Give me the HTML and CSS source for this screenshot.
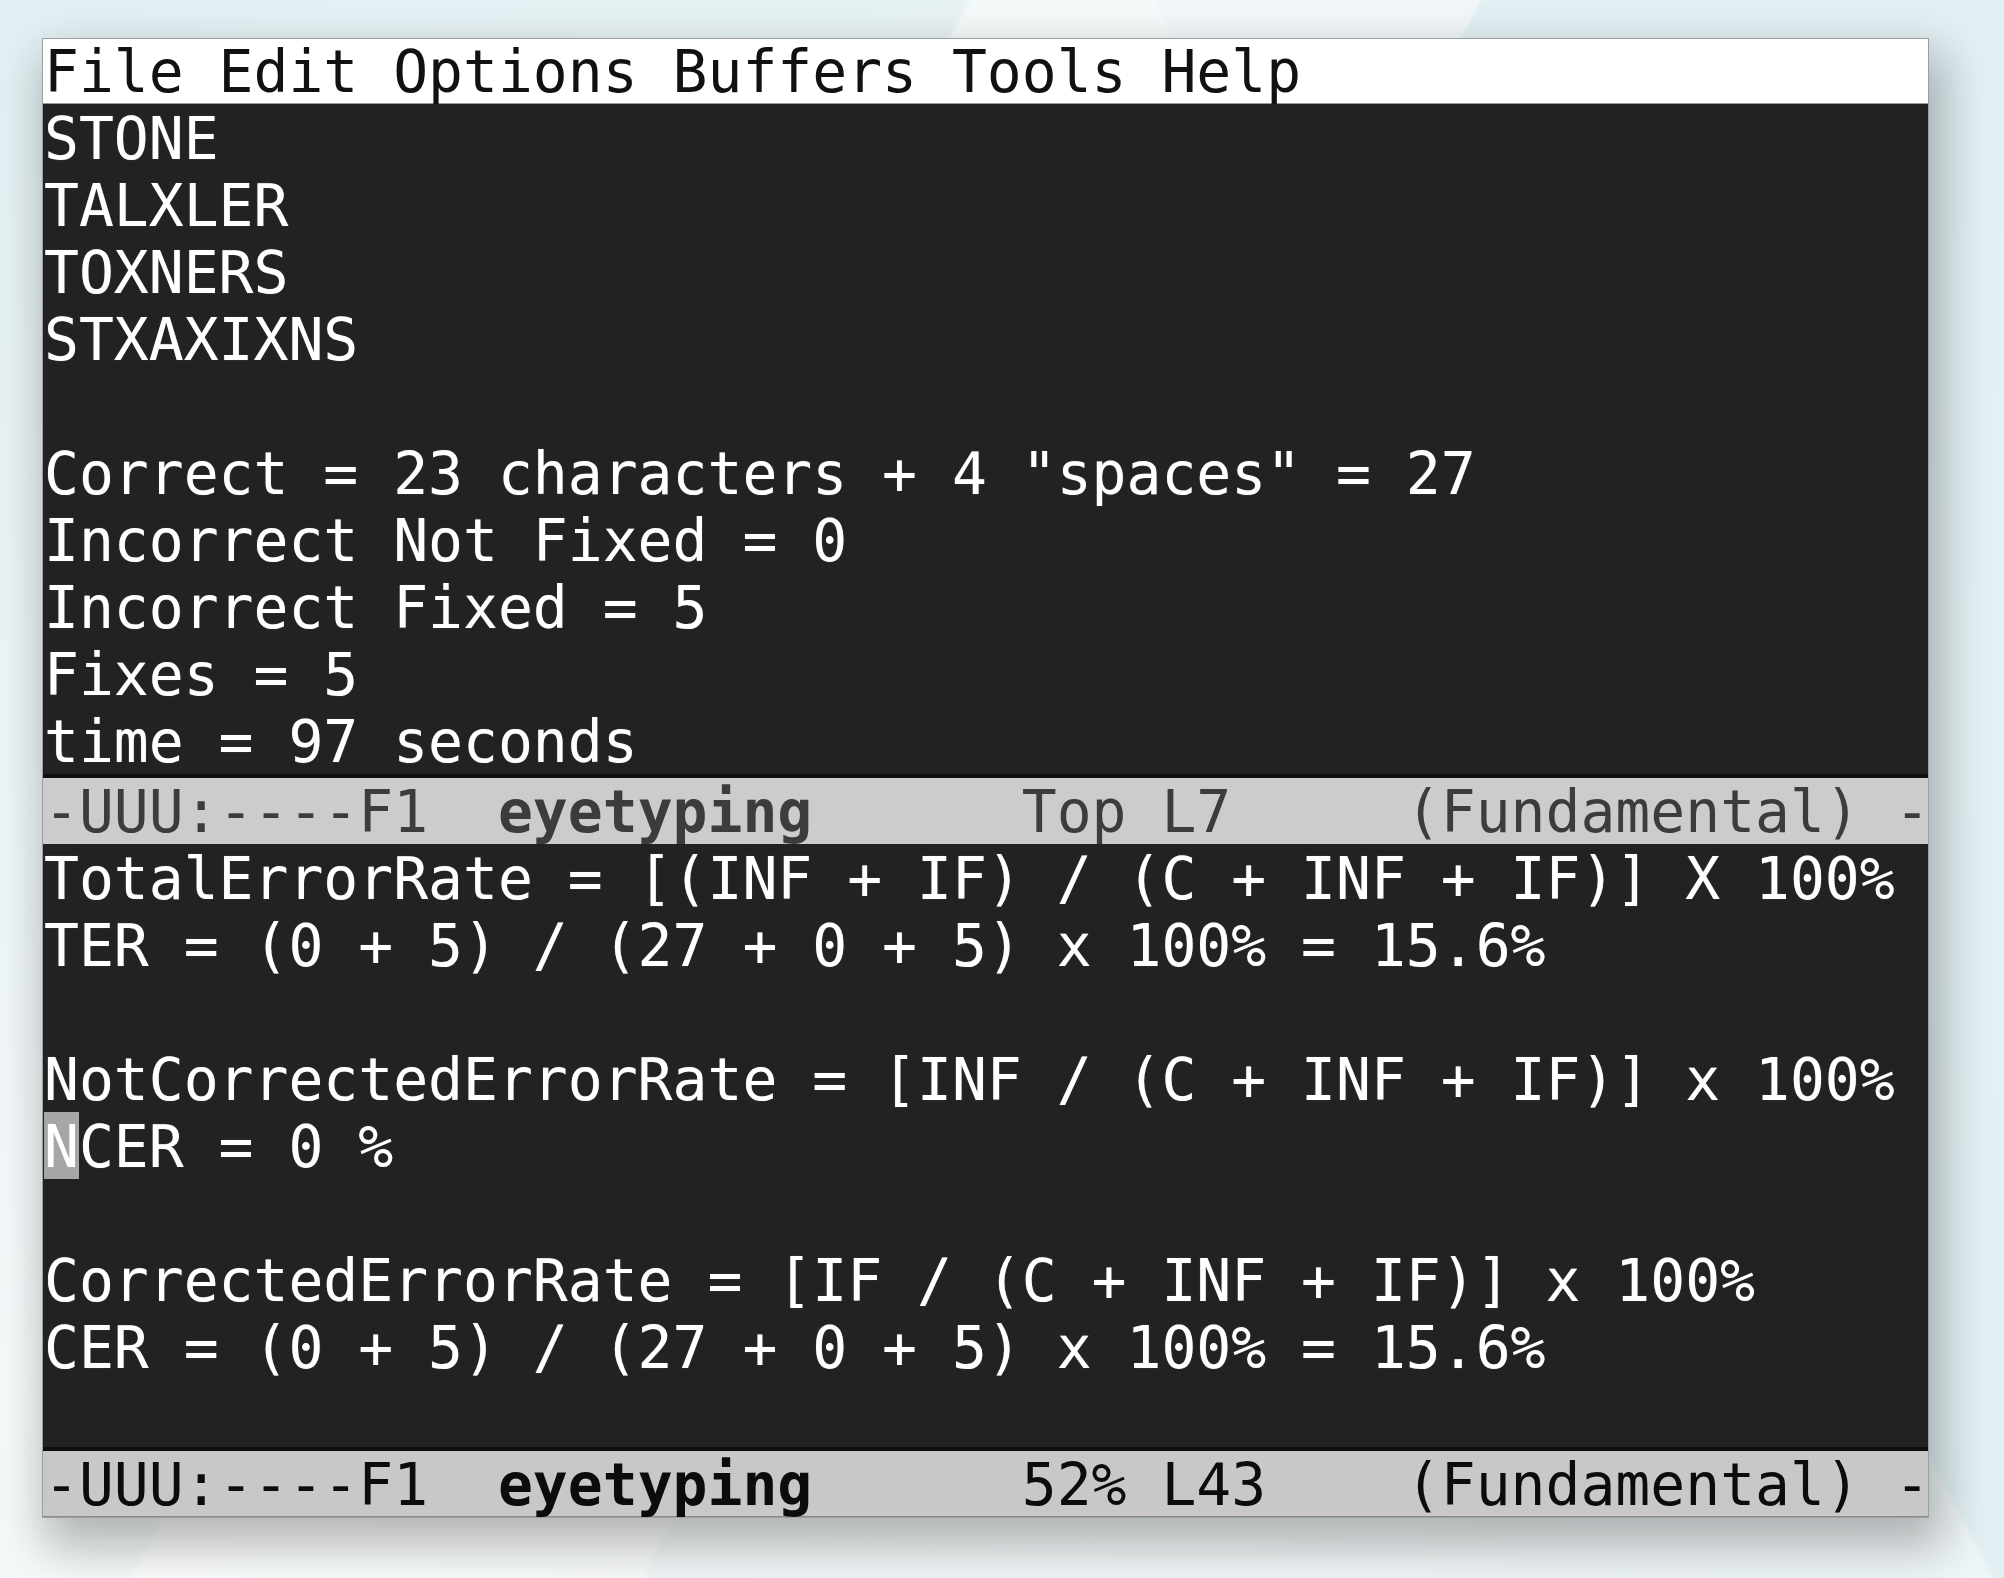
FILE: index.html
```html
<!DOCTYPE html>
<html>
<head>
<meta charset="utf-8">
<title>eyetyping</title>
<link rel="stylesheet" href="styles.css">
</head>
<body>
<div class="desk">
  <div class="frame">
    <div class="menubar">File Edit Options Buffers Tools Help</div>
    <div class="window win-top">
      <div class="buffer">
        <div class="line">STONE</div>
        <div class="line">TALXLER</div>
        <div class="line">TOXNERS</div>
        <div class="line">STXAXIXNS</div>
        <div class="line"> </div>
        <div class="line">Correct = 23 characters + 4 "spaces" = 27</div>
        <div class="line">Incorrect Not Fixed = 0</div>
        <div class="line">Incorrect Fixed = 5</div>
        <div class="line">Fixes = 5</div>
        <div class="line">time = 97 seconds</div>
      </div>
      <div class="modeline inactive">-UUU:----F1  <b>eyetyping</b>      Top L7     (Fundamental) -</div>
    </div>
    <div class="window win-bottom">
      <div class="buffer">
        <div class="line">TotalErrorRate = [(INF + IF) / (C + INF + IF)] X 100%</div>
        <div class="line">TER = (0 + 5) / (27 + 0 + 5) x 100% = 15.6%</div>
        <div class="line"> </div>
        <div class="line">NotCorrectedErrorRate = [INF / (C + INF + IF)] x 100%</div>
        <div class="line"><span class="cursor">N</span>CER = 0 %</div>
        <div class="line"> </div>
        <div class="line">CorrectedErrorRate = [IF / (C + INF + IF)] x 100%</div>
        <div class="line">CER = (0 + 5) / (27 + 0 + 5) x 100% = 15.6%</div>
        <div class="line"> </div>
      </div>
      <div class="modeline active">-UUU:----F1  <b>eyetyping</b>      52% L43    (Fundamental) -</div>
    </div>
  </div>
</div>
</body>
</html>
```
FILE: styles.css
```css
html, body {
  margin: 0;
  padding: 0;
}
body {
  width: 2004px;
  height: 1578px;
  overflow: hidden;
  font-family: "DejaVu Sans Mono", "Liberation Mono", monospace;
}
.desk {
  width: 2004px;
  height: 1578px;
  padding: 39px 0 0 43px;
  box-sizing: border-box;
  background:
    linear-gradient(118deg, rgba(255,255,255,0) 0%, rgba(255,255,255,0) 34%, rgba(255,255,255,0.55) 34.2%, rgba(255,255,255,0.55) 52%, rgba(255,255,255,0) 52.2%),
    linear-gradient(62deg, rgba(220,236,240,0) 0%, rgba(220,236,240,0) 70%, rgba(222,238,242,0.7) 70.2%, rgba(222,238,242,0.7) 100%),
    linear-gradient(160deg, #e3f0f3 0%, #edf5f7 35%, #f6fafb 60%, #eef5f6 100%);
}
.frame {
  width: 1885px;
  background: #222222;
  outline: 1px solid #9a9fa0;
  box-shadow: 8px 22px 44px 8px rgba(0, 0, 0, 0.28);
}
.menubar {
  height: 65px;
  padding-top: 2px;
  line-height: 62px;
  background: #ffffff;
  color: #111111;
  font-size: 58px;
  white-space: pre;
  padding-left: 1px;
  border-bottom: 1px solid #9a9a9a;
  box-sizing: border-box;
}
.buffer {
  background: #222222;
  color: #ffffff;
  font-size: 58px;
}
.line {
  height: 67px;
  padding-top: 4px;
  line-height: 63px;
  box-sizing: border-box;
  white-space: pre;
  padding-left: 1px;
  text-shadow: 0 0 1px rgba(255,255,255,0.4);
}
.cursor {
  display: inline-block;
  vertical-align: top;
  box-sizing: border-box;
  height: 67px;
  margin-top: -4px;
  padding-top: 4px;
  line-height: 63px;
  background: #a6a6a6;
  color: #ffffff;
}
.modeline {
  height: 70px;
  padding-top: 2px;
  line-height: 64px;
  font-size: 58px;
  white-space: pre;
  padding-left: 1px;
  background: #c9c9c9;
  border-top: 4px solid #0f0f0f;
  box-sizing: border-box;
}
.modeline b {
  font-weight: bold;
}
.modeline.inactive {
  color: #3c3c3c;
  background: #cccccc;
}
.modeline.active {
  color: #0c0c0c;
  background: #c8c8c8;
  border-bottom: 1px solid #8c8c8c;
}
```
